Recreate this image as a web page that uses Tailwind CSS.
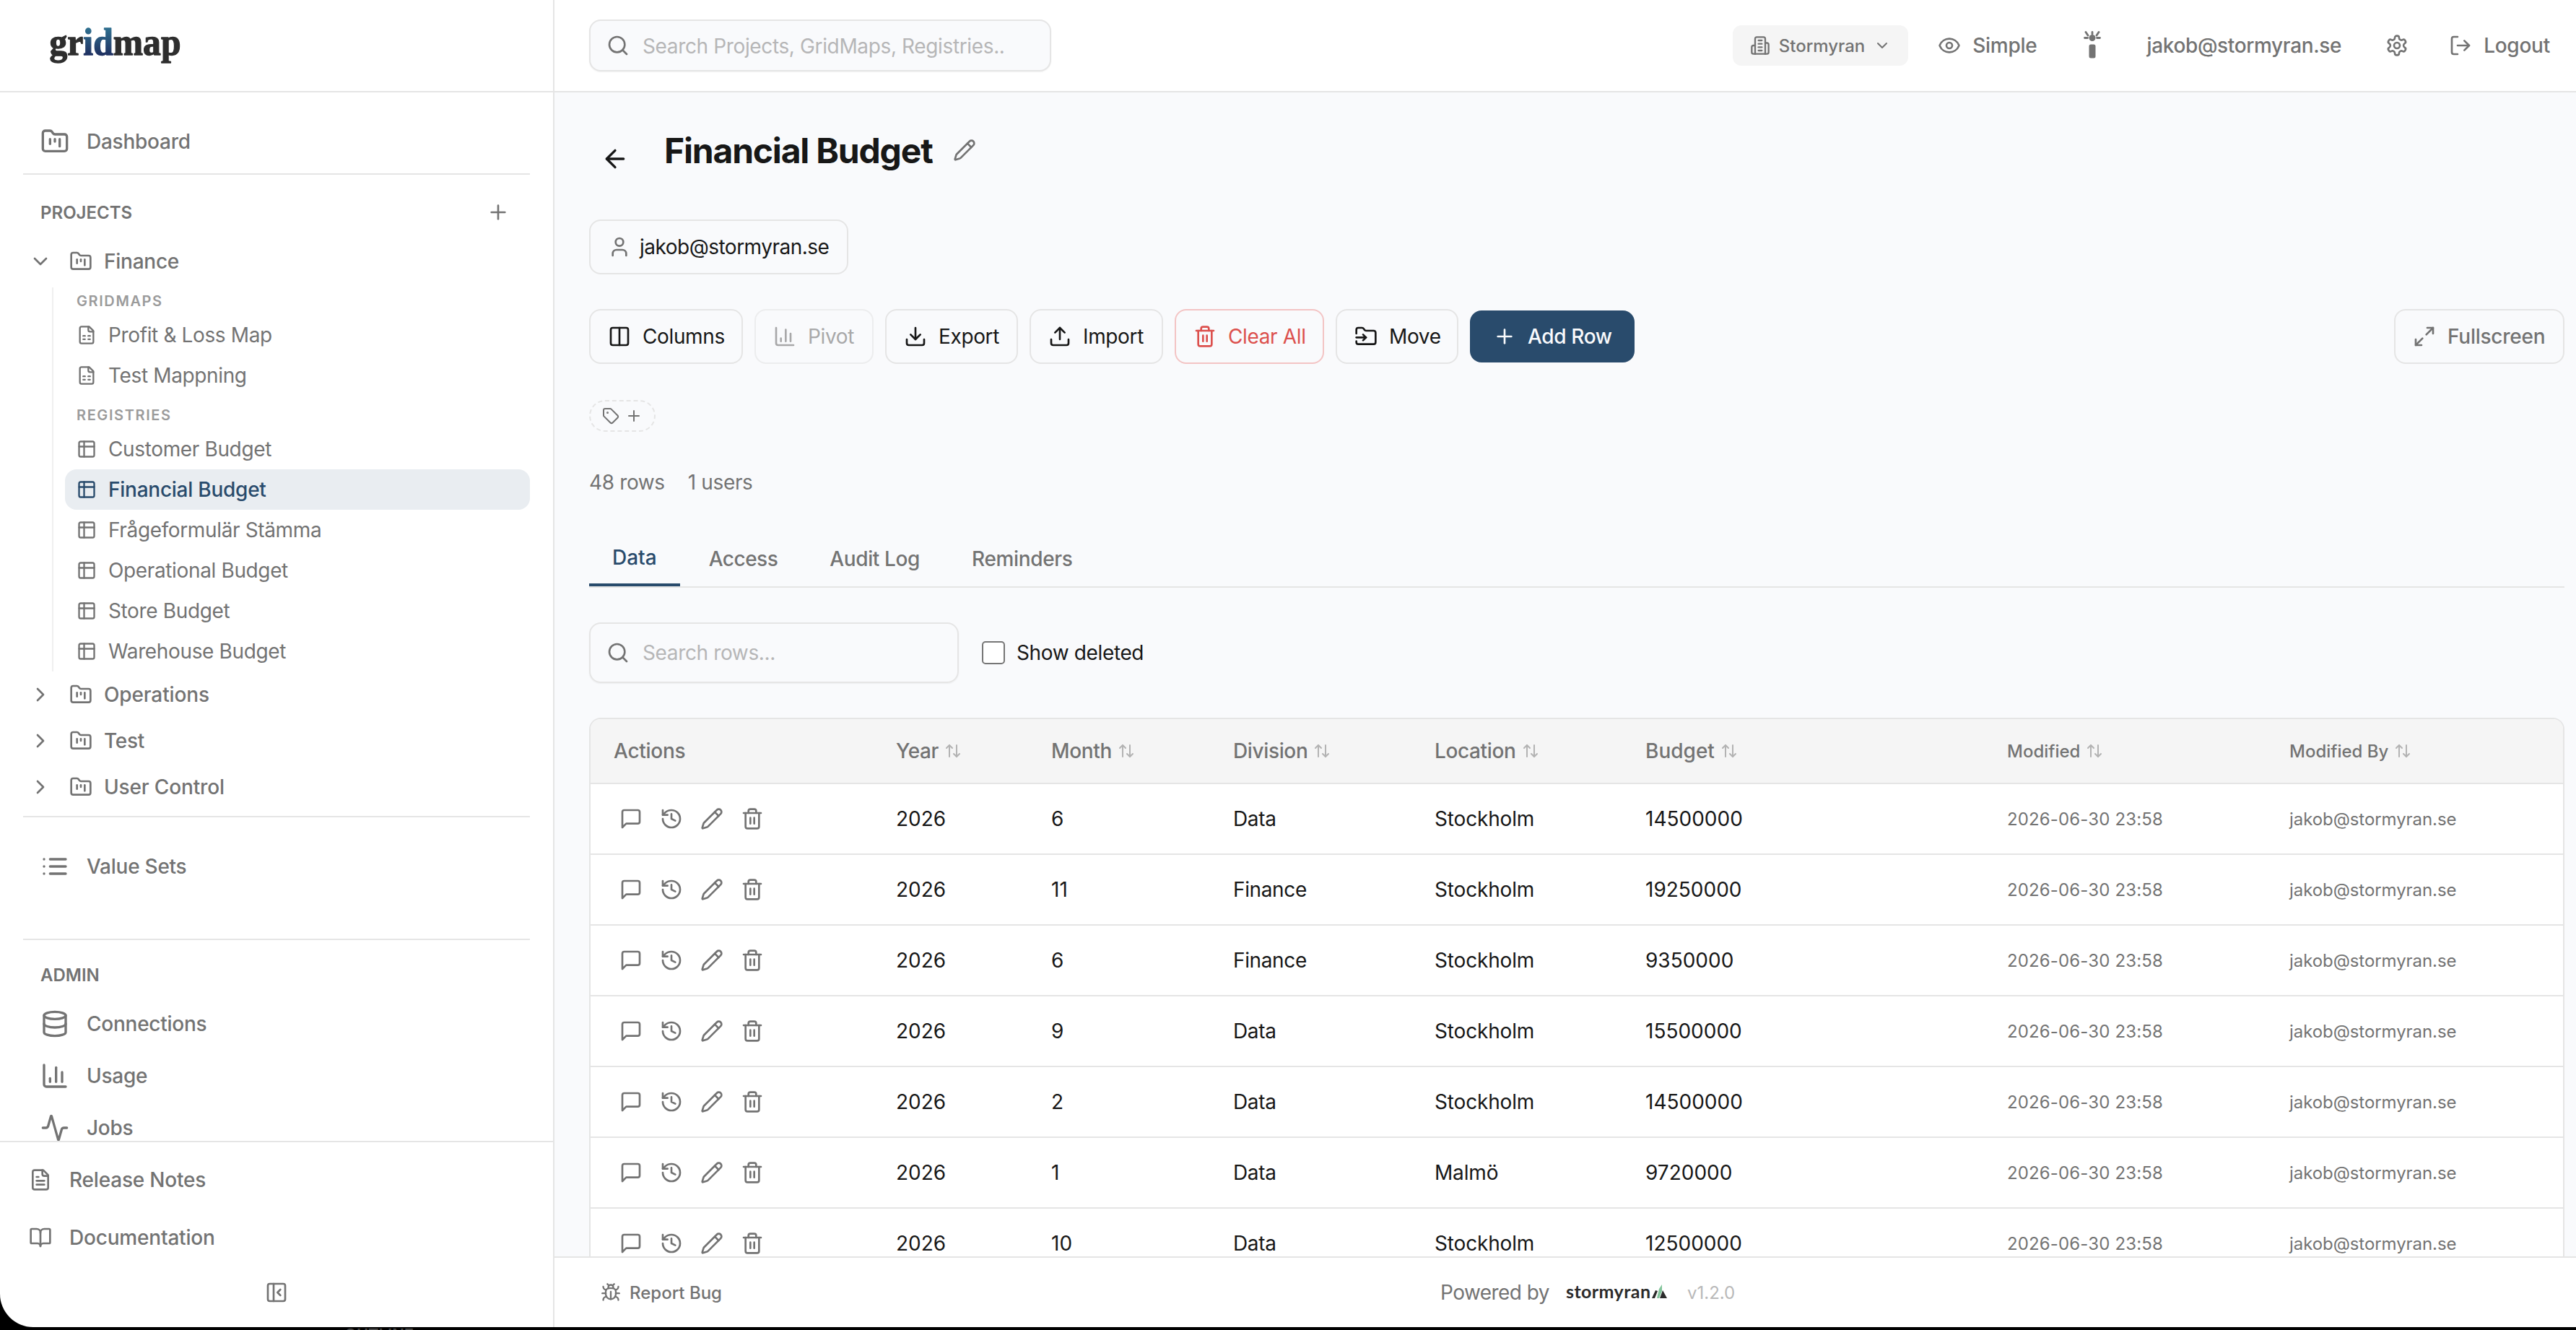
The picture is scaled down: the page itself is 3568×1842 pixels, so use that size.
<!DOCTYPE html>
<html lang="en">
<head>
    <meta charset="UTF-8">
    <meta name="viewport" content="width=device-width, initial-scale=1.0">
    <title>Financial Budget - gridmap</title>
    <script src="https://cdn.jsdelivr.net/npm/@tailwindcss/browser@4"></script>
</head>
<body class="bg-black font-['Inter',sans-serif] text-[28px] leading-10 tracking-[-0.013em] text-[#171717] h-[1842px] overflow-hidden">
    <!-- Icon sprite -->
    <svg class="hidden">
        <symbol id="folder" viewBox="0 0 24 24"><path d="M4 20h16a2 2 0 0 0 2-2V8a2 2 0 0 0-2-2h-7.93a2 2 0 0 1-1.66-.9l-.82-1.2A2 2 0 0 0 7.93 3H4a2 2 0 0 0-2 2v13c0 1.1.9 2 2 2Z"/><path d="M8 10v4"/><path d="M12 10v2"/><path d="M16 10v6"/></symbol>
        <symbol id="plus" viewBox="0 0 24 24"><path d="M5 12h14"/><path d="M12 5v14"/></symbol>
        <symbol id="chevron-down" viewBox="0 0 24 24"><path d="m6 9 6 6 6-6"/></symbol>
        <symbol id="chevron-right" viewBox="0 0 24 24"><path d="m9 18 6-6-6-6"/></symbol>
        <symbol id="sheet" viewBox="0 0 24 24"><path d="M15 2H6a2 2 0 0 0-2 2v16a2 2 0 0 0 2 2h12a2 2 0 0 0 2-2V7Z"/><path d="M14 2v4a2 2 0 0 0 2 2h4"/><path d="M8 13h2"/><path d="M14 13h2"/><path d="M8 17h2"/><path d="M14 17h2"/></symbol>
        <symbol id="table" viewBox="0 0 24 24"><rect width="18" height="18" x="3" y="3" rx="2"/><path d="M3 9h18"/><path d="M9 3v18"/></symbol>
        <symbol id="list" viewBox="0 0 24 24"><path d="M3 6h.01"/><path d="M3 12h.01"/><path d="M3 18h.01"/><path d="M8 6h13"/><path d="M8 12h13"/><path d="M8 18h13"/></symbol>
        <symbol id="database" viewBox="0 0 24 24"><ellipse cx="12" cy="5" rx="9" ry="3"/><path d="M3 5V19A9 3 0 0 0 21 19V5"/><path d="M3 12A9 3 0 0 0 21 12"/></symbol>
        <symbol id="chart" viewBox="0 0 24 24"><path d="M3 3v16a2 2 0 0 0 2 2h16"/><path d="M18 17V9"/><path d="M13 17V5"/><path d="M8 17v-3"/></symbol>
        <symbol id="activity" viewBox="0 0 24 24"><path d="M22 12h-2.48a2 2 0 0 0-1.93 1.46l-2.35 8.36a.25.25 0 0 1-.48 0L9.24 2.18a.25.25 0 0 0-.48 0l-2.35 8.36A2 2 0 0 1 4.49 12H2"/></symbol>
        <symbol id="file-text" viewBox="0 0 24 24"><path d="M15 2H6a2 2 0 0 0-2 2v16a2 2 0 0 0 2 2h12a2 2 0 0 0 2-2V7Z"/><path d="M14 2v4a2 2 0 0 0 2 2h4"/><path d="M10 9H8"/><path d="M16 13H8"/><path d="M16 17H8"/></symbol>
        <symbol id="book" viewBox="0 0 24 24"><path d="M12 7v14"/><path d="M3 18a1 1 0 0 1-1-1V4a1 1 0 0 1 1-1h5a4 4 0 0 1 4 4 4 4 0 0 1 4-4h5a1 1 0 0 1 1 1v13a1 1 0 0 1-1 1h-6a3 3 0 0 0-3 3 3 3 0 0 0-3-3z"/></symbol>
        <symbol id="panel" viewBox="0 0 24 24"><rect width="18" height="18" x="3" y="3" rx="2"/><path d="M9 3v18"/><path d="m16 15-3-3 3-3"/></symbol>
        <symbol id="search" viewBox="0 0 24 24"><circle cx="11" cy="11" r="8"/><path d="m21 21-4.3-4.3"/></symbol>
        <symbol id="building" viewBox="0 0 24 24"><path d="M6 22V4a2 2 0 0 1 2-2h8a2 2 0 0 1 2 2v18Z"/><path d="M6 12H4a2 2 0 0 0-2 2v6a2 2 0 0 0 2 2h2"/><path d="M18 9h2a2 2 0 0 1 2 2v9a2 2 0 0 1-2 2h-2"/><path d="M10 6h4"/><path d="M10 10h4"/><path d="M10 14h4"/><path d="M10 18h4"/></symbol>
        <symbol id="eye" viewBox="0 0 24 24"><path d="M2.062 12.348a1 1 0 0 1 0-.696 10.75 10.75 0 0 1 19.876 0 1 1 0 0 1 0 .696 10.75 10.75 0 0 1-19.876 0"/><circle cx="12" cy="12" r="3"/></symbol>
        <symbol id="settings" viewBox="0 0 24 24"><path d="M12.22 2h-.44a2 2 0 0 0-2 2v.18a2 2 0 0 1-1 1.73l-.43.25a2 2 0 0 1-2 0l-.15-.08a2 2 0 0 0-2.73.73l-.22.38a2 2 0 0 0 .73 2.73l.15.1a2 2 0 0 1 1 1.72v.51a2 2 0 0 1-1 1.74l-.15.09a2 2 0 0 0-.73 2.73l.22.38a2 2 0 0 0 2.73.73l.15-.08a2 2 0 0 1 2 0l.43.25a2 2 0 0 1 1 1.73V20a2 2 0 0 0 2 2h.44a2 2 0 0 0 2-2v-.18a2 2 0 0 1 1-1.73l.43-.25a2 2 0 0 1 2 0l.15.08a2 2 0 0 0 2.73-.73l.22-.39a2 2 0 0 0-.73-2.73l-.15-.08a2 2 0 0 1-1-1.74v-.5a2 2 0 0 1 1-1.74l.15-.09a2 2 0 0 0 .73-2.73l-.22-.38a2 2 0 0 0-2.73-.73l-.15.08a2 2 0 0 1-2 0l-.43-.25a2 2 0 0 1-1-1.73V4a2 2 0 0 0-2-2z"/><circle cx="12" cy="12" r="3"/></symbol>
        <symbol id="logout" viewBox="0 0 24 24"><path d="m16 17 5-5-5-5"/><path d="M21 12H9"/><path d="M9 21H5a2 2 0 0 1-2-2V5a2 2 0 0 1 2-2h4"/></symbol>
        <symbol id="arrow-left" viewBox="0 0 24 24"><path d="m12 19-7-7 7-7"/><path d="M19 12H5"/></symbol>
        <symbol id="pencil" viewBox="0 0 24 24"><path d="M21.174 6.812a1 1 0 0 0-3.986-3.987L3.842 16.174a2 2 0 0 0-.5.83l-1.321 4.352a.5.5 0 0 0 .623.622l4.353-1.32a2 2 0 0 0 .83-.497z"/><path d="m15 5 4 4"/></symbol>
        <symbol id="user" viewBox="0 0 24 24"><path d="M19 21v-2a4 4 0 0 0-4-4H9a4 4 0 0 0-4 4v2"/><circle cx="12" cy="7" r="4"/></symbol>
        <symbol id="columns" viewBox="0 0 24 24"><rect width="18" height="18" x="3" y="3" rx="2"/><path d="M12 3v18"/></symbol>
        <symbol id="download" viewBox="0 0 24 24"><path d="M12 15V3"/><path d="M21 15v4a2 2 0 0 1-2 2H5a2 2 0 0 1-2-2v-4"/><path d="m7 10 5 5 5-5"/></symbol>
        <symbol id="upload" viewBox="0 0 24 24"><path d="M12 3v12"/><path d="m17 8-5-5-5 5"/><path d="M21 15v4a2 2 0 0 1-2 2H5a2 2 0 0 1-2-2v-4"/></symbol>
        <symbol id="trash" viewBox="0 0 24 24"><path d="M10 11v6"/><path d="M14 11v6"/><path d="M19 6v14a2 2 0 0 1-2 2H7a2 2 0 0 1-2-2V6"/><path d="M3 6h18"/><path d="M8 6V4a2 2 0 0 1 2-2h4a2 2 0 0 1 2 2v2"/></symbol>
        <symbol id="move" viewBox="0 0 24 24"><path d="M2 9V5a2 2 0 0 1 2-2h3.9a2 2 0 0 1 1.69.9l.81 1.2a2 2 0 0 0 1.67.9H20a2 2 0 0 1 2 2v10a2 2 0 0 1-2 2H4a2 2 0 0 1-2-2v-1"/><path d="M2 13h10"/><path d="m9 16 3-3-3-3"/></symbol>
        <symbol id="maximize" viewBox="0 0 24 24"><path d="M15 3h6v6"/><path d="m21 3-7 7"/><path d="m3 21 7-7"/><path d="M9 21H3v-6"/></symbol>
        <symbol id="tag" viewBox="0 0 24 24"><path d="M12.586 2.586A2 2 0 0 0 11.172 2H4a2 2 0 0 0-2 2v7.172a2 2 0 0 0 .586 1.414l8.704 8.704a2.426 2.426 0 0 0 3.42 0l6.58-6.58a2.426 2.426 0 0 0 0-3.42z"/><circle cx="7.5" cy="7.5" r=".5" fill="currentColor"/></symbol>
        <symbol id="sort" viewBox="0 0 24 24"><path d="m21 16-4 4-4-4"/><path d="M17 20V4"/><path d="m3 8 4-4 4 4"/><path d="M7 4v16"/></symbol>
        <symbol id="message" viewBox="0 0 24 24"><path d="M21 15a2 2 0 0 1-2 2H7l-4 4V5a2 2 0 0 1 2-2h14a2 2 0 0 1 2 2z"/></symbol>
        <symbol id="history" viewBox="0 0 24 24"><path d="M3 12a9 9 0 1 0 9-9 9.75 9.75 0 0 0-6.74 2.74L3 8"/><path d="M3 3v5h5"/><path d="M12 7v5l4 2"/></symbol>
        <symbol id="bug" viewBox="0 0 24 24"><path d="M12 20v-9"/><path d="M14 7a4 4 0 0 1 4 4v3a6 6 0 0 1-12 0v-3a4 4 0 0 1 4-4z"/><path d="M14.12 3.88 16 2"/><path d="M21 21a4 4 0 0 0-3.81-4"/><path d="M21 5a4 4 0 0 1-3.55 3.97"/><path d="M22 13h-4"/><path d="M3 21a4 4 0 0 1 3.81-4"/><path d="M3 5a4 4 0 0 0 3.55 3.97"/><path d="M6 13H2"/><path d="m8 2 1.88 1.88"/><path d="M9 7.13V6a3 3 0 1 1 6 0v1.13"/></symbol>
    </svg>

    <div class="flex h-[1838px] w-full overflow-hidden rounded-bl-[46px] bg-white [&_svg]:shrink-0 [&_svg]:fill-none [&_svg]:stroke-current [&_svg]:stroke-2 [&_svg]:[stroke-linecap:round] [&_svg]:[stroke-linejoin:round]">
        <!-- Sidebar -->
        <aside class="flex w-[768px] shrink-0 flex-col border-r-2 border-[#e5e5e5] text-[#737373]">
            <div class="flex h-32 shrink-0 items-center border-b-2 border-[#e5e5e5] pl-[68px]">
                <svg class="h-16 w-[184px] overflow-visible" viewBox="0 0 184 64">
                    <defs>
                        <linearGradient id="logoBlue" x1="0" y1="8" x2="0" y2="46" gradientUnits="userSpaceOnUse">
                            <stop offset="0" stop-color="#2f6f8f"/>
                            <stop offset="1" stop-color="#1f2f60"/>
                        </linearGradient>
                    </defs>
                    <text x="0.500" y="45" textLength="182" lengthAdjust="spacingAndGlyphs" font-family="Liberation Serif, serif" font-weight="700" font-size="53" fill="#2e2e2e" stroke="#2e2e2e" stroke-width="1.3" letter-spacing="0">gr<tspan fill="url(#logoBlue)" stroke="url(#logoBlue)">id</tspan>map</text>
                </svg>
            </div>
            <nav class="min-h-0 flex-1 overflow-hidden px-8 pt-8">
                <a class="mb-2 flex h-[72px] items-center gap-6 px-6 font-medium tracking-[-0.009em]"><svg class="size-10"><use href="#folder"/></svg>Dashboard</a>
                <div class="border-t-2 border-[#e5e5e5] pt-8">
                    <div class="mb-4 flex h-10 items-center justify-between pl-6 pr-7"><span class="pt-0.5 text-2xl font-semibold tracking-normal">PROJECTS</span><svg class="size-8"><use href="#plus"/></svg></div>
                    <div class="flex h-16 items-center pl-2 font-medium tracking-[-0.009em]"><svg class="mr-6 size-8"><use href="#chevron-down"/></svg><svg class="mr-4 size-8"><use href="#folder"/></svg>Finance</div>
                    <div class="ml-10 mt-1 border-l-2 border-[#f0f0f0] pl-4">
                        <div class="flex h-[38px] items-center pl-4 text-xl font-semibold tracking-[0.08em] text-[#9b9b9b]">GRIDMAPS</div>
                        <a class="flex h-14 items-center gap-4 pl-4"><svg class="size-7"><use href="#sheet"/></svg>Profit &amp; Loss Map</a>
                        <a class="flex h-14 items-center gap-4 pl-4"><svg class="size-7"><use href="#sheet"/></svg>Test Mappning</a>
                        <div class="mt-2 flex h-[38px] items-center pl-4 text-xl font-semibold tracking-[0.08em] text-[#9b9b9b]">REGISTRIES</div>
                        <a class="flex h-14 items-center gap-4 pl-4"><svg class="size-7"><use href="#table"/></svg>Customer Budget</a>
                        <a class="flex h-14 items-center gap-4 rounded-2xl bg-[#e9edf1] pl-4 font-medium tracking-[-0.009em] text-[#294b6c]"><svg class="size-7"><use href="#table"/></svg>Financial Budget</a>
                        <a class="flex h-14 items-center gap-4 pl-4"><svg class="size-7"><use href="#table"/></svg>Frågeformulär Stämma</a>
                        <a class="flex h-14 items-center gap-4 pl-4"><svg class="size-7"><use href="#table"/></svg>Operational Budget</a>
                        <a class="flex h-14 items-center gap-4 pl-4"><svg class="size-7"><use href="#table"/></svg>Store Budget</a>
                        <a class="flex h-14 items-center gap-4 pl-4"><svg class="size-7"><use href="#table"/></svg>Warehouse Budget</a>
                    </div>
                    <div class="flex h-16 items-center pl-2 font-medium tracking-[-0.005em]"><svg class="mr-6 size-8"><use href="#chevron-right"/></svg><svg class="mr-4 size-8"><use href="#folder"/></svg>Operations</div>
                    <div class="flex h-16 items-center pl-2 font-medium tracking-[-0.009em]"><svg class="mr-6 size-8"><use href="#chevron-right"/></svg><svg class="mr-4 size-8"><use href="#folder"/></svg>Test</div>
                    <div class="flex h-16 items-center pl-2 font-medium tracking-[-0.005em]"><svg class="mr-6 size-8"><use href="#chevron-right"/></svg><svg class="mr-4 size-8"><use href="#folder"/></svg>User Control</div>
                </div>
                <div class="mt-2 border-t-2 border-[#e5e5e5] pb-16 pt-8">
                    <a class="flex h-[72px] items-center gap-6 px-6 font-medium tracking-[-0.009em]"><svg class="size-10"><use href="#list"/></svg>Value Sets</a>
                </div>
                <div class="border-t-2 border-[#e5e5e5] pt-8">
                    <div class="mb-4 flex h-8 items-center pl-6 pt-0.5 text-2xl font-semibold tracking-normal">ADMIN</div>
                    <a class="flex h-[72px] items-center gap-6 px-6 font-medium tracking-[-0.009em]"><svg class="size-10"><use href="#database"/></svg>Connections</a>
                    <a class="flex h-[72px] items-center gap-6 px-6 font-medium tracking-[-0.009em]"><svg class="size-10"><use href="#chart"/></svg>Usage</a>
                    <a class="flex h-[72px] items-center gap-6 px-6 font-medium tracking-[-0.009em]"><svg class="size-10"><use href="#activity"/></svg>Jobs</a>
                </div>
            </nav>
            <div class="h-[258px] shrink-0 border-t-2 border-[#e5e5e5] px-4 pt-4 font-medium tracking-[-0.007em]">
                <a class="mb-2 flex h-[72px] items-center gap-6 px-6"><svg class="size-8"><use href="#file-text"/></svg>Release Notes</a>
                <a class="flex h-[72px] items-center gap-6 px-6"><svg class="size-8"><use href="#book"/></svg>Documentation</a>
                <div class="mt-2 flex h-16 items-center justify-center"><svg class="size-8"><use href="#panel"/></svg></div>
            </div>
        </aside>

        <div class="flex min-w-0 flex-1 flex-col">
            <!-- Top bar -->
            <header class="flex h-32 shrink-0 items-center justify-between border-b-2 border-[#e5e5e5] pl-12 pr-9 font-medium text-[#737373]">
                <div class="flex h-[72px] w-[640px] items-center gap-[18px] rounded-2xl border-2 border-[#e5e5e5] bg-[#f9fafc] px-[22px] font-normal shadow-xs"><svg class="size-8"><use href="#search"/></svg><span class="pt-0.5 text-[#b6b6b7]">Search Projects, GridMaps, Registries..</span></div>
                <div class="flex items-center">
                    <div class="mr-[41px] flex h-14 items-center rounded-xl bg-[#f5f5f5] px-6 text-2xl tracking-normal"><svg class="mr-3 size-7"><use href="#building"/></svg><span class="pt-0.5">Stormyran</span><svg class="ml-3 size-6"><use href="#chevron-down"/></svg></div>
                    <div class="mr-16 flex items-center gap-4 tracking-[-0.009em]"><svg class="size-8"><use href="#eye"/></svg>Simple</div>
                    <!-- Flashlight -->
                    <svg class="mr-16 h-10 w-6" viewBox="0 0 24 40">
                        <path stroke-width="2.8" d="M12 1.500v2.500M3 1.500l3 4.500M21 1.500l-3 4.500M1.500 9.500h4M18.500 9.500h4"/>
                        <circle cx="12" cy="9.500" r="4.500" fill="currentColor" stroke="none"/>
                        <rect x="7.500" y="18.500" width="9" height="19" rx="2.500" fill="currentColor" stroke="none"/>
                    </svg>
                    <span class="mr-[61px]">jakob@stormyran.se</span>
                    <svg class="mr-14 size-8"><use href="#settings"/></svg>
                    <div class="flex items-center gap-4 tracking-[-0.009em]"><svg class="size-8"><use href="#logout"/></svg>Logout</div>
                </div>
            </header>

            <!-- Registry page -->
            <main class="min-h-0 flex-1 overflow-hidden bg-[#f9fafc] pl-12 pr-4">
                <div class="flex h-40 pl-4 pt-[52px]">
                    <svg class="mt-5 size-10"><use href="#arrow-left"/></svg>
                    <h1 class="ml-12 mt-[-3px] text-[48px] font-bold leading-[64px] tracking-[-0.025em]">Financial Budget</h1>
                    <svg class="ml-7 mt-3 size-8 text-[#737373]"><use href="#pencil"/></svg>
                </div>
                <div class="mt-4 flex h-[76px] w-[359px] items-center gap-3 rounded-2xl border-2 border-[#e5e5e5] px-6 tracking-[-0.018em]"><svg class="size-8 text-[#737373]"><use href="#user"/></svg>jakob@stormyran.se</div>

                <div class="mt-12 flex h-[76px] items-center gap-4 whitespace-nowrap">
                    <div class="flex h-[76px] w-[213px] items-center gap-4 rounded-2xl border-2 border-[#e5e5e5] px-6"><svg class="size-8"><use href="#columns"/></svg>Columns</div>
                    <div class="flex h-[76px] w-[165px] items-center gap-4 rounded-2xl border-2 border-[#e5e5e5] px-6 text-[#737373] opacity-60"><svg class="size-8"><use href="#chart"/></svg>Pivot</div>
                    <div class="flex h-[76px] w-[184px] items-center gap-4 rounded-2xl border-2 border-[#e5e5e5] px-6"><svg class="size-8"><use href="#download"/></svg>Export</div>
                    <div class="flex h-[76px] w-[185px] items-center gap-4 rounded-2xl border-2 border-[#e5e5e5] px-6"><svg class="size-8"><use href="#upload"/></svg>Import</div>
                    <div class="flex h-[76px] w-[207px] items-center gap-4 rounded-2xl border-2 border-[#f3c4c4] px-6 text-[#dc504d]"><svg class="size-8"><use href="#trash"/></svg>Clear All</div>
                    <div class="flex h-[76px] w-[170px] items-center gap-4 rounded-2xl border-2 border-[#e5e5e5] px-6"><svg class="size-8"><use href="#move"/></svg>Move</div>
                    <div class="flex h-[72px] w-[228px] items-center gap-4 rounded-2xl bg-[#294b6c] px-8 font-medium text-[#f9fafc]"><svg class="size-8"><use href="#plus"/></svg>Add Row</div>
                    <div class="ml-auto flex h-[76px] w-[236px] items-center gap-4 rounded-2xl border-2 border-[#e5e5e5] px-6 font-medium tracking-[-0.009em] text-[#737373]"><svg class="size-8"><use href="#maximize"/></svg>Fullscreen</div>
                </div>

                <div class="mt-[50px] flex h-11 w-fit items-center gap-2 rounded-full border-2 border-dashed border-[#e5e5e5] px-4 text-[#737373]"><svg class="size-6"><use href="#tag"/></svg><svg class="size-6"><use href="#plus"/></svg></div>

                <div class="mt-[50px] flex gap-8 text-[#737373]"><span>48 rows</span><span>1 users</span></div>

                <div class="mt-12 flex h-[78px] items-end gap-2 border-b-2 border-[#e5e5e5] font-medium text-[#737373]">
                    <div class="border-b-4 border-[#294b6c] px-8 pb-4 tracking-normal text-[#294b6c]">Data</div>
                    <div class="px-8 pb-[18px] tracking-[-0.018em]">Access</div>
                    <div class="px-8 pb-[18px]">Audit Log</div>
                    <div class="px-8 pb-[18px]">Reminders</div>
                </div>

                <div class="mt-12 flex items-center">
                    <div class="flex h-[84px] w-[512px] items-center gap-[18px] rounded-2xl border-2 border-[#e5e5e5] px-[22px] shadow-xs"><svg class="size-8 text-[#737373]"><use href="#search"/></svg><span class="text-[#b6b6b7]">Search rows...</span></div>
                    <span class="ml-8 mr-4 size-8 rounded-[5px] border-2 border-[#767676] bg-white"></span>
                    Show deleted
                </div>

                <div class="mt-12 overflow-hidden rounded-t-2xl border-2 border-b-0 border-[#e5e5e5] bg-white">
                    <div class="grid h-[90px] grid-cols-[391px_215px_252px_279px_292px_501px_391px_1fr] items-center border-b-2 border-[#e5e5e5] bg-[#f5f5f5] pl-8 font-medium text-[#737373]">
                        <div class="tracking-[-0.009em]">Actions</div>
                        <div class="flex items-center gap-2">Year<svg class="size-6 opacity-50"><use href="#sort"/></svg></div>
                        <div class="flex items-center gap-2">Month<svg class="size-6 opacity-50"><use href="#sort"/></svg></div>
                        <div class="flex items-center gap-2">Division<svg class="size-6 opacity-50"><use href="#sort"/></svg></div>
                        <div class="flex items-center gap-2">Location<svg class="size-6 opacity-50"><use href="#sort"/></svg></div>
                        <div class="flex items-center gap-2 tracking-normal">Budget<svg class="size-6 opacity-50"><use href="#sort"/></svg></div>
                        <div class="flex items-center gap-2 text-2xl tracking-normal"><span class="pt-0.5">Modified</span><svg class="size-6 opacity-50"><use href="#sort"/></svg></div>
                        <div class="flex items-center gap-2 text-2xl tracking-normal"><span class="pt-0.5">Modified By</span><svg class="size-6 opacity-50"><use href="#sort"/></svg></div>
                    </div>
                    <div id="rows"></div>
                </div>
            </main>

            <footer class="grid h-[98px] shrink-0 grid-cols-[1163px_1fr] items-center border-t-2 border-[#e5e5e5] pl-16 text-[#737373]">
                <div class="flex items-center gap-3 text-2xl font-medium tracking-normal"><svg class="size-7"><use href="#bug"/></svg><span class="pt-0.5">Report Bug</span></div>
                <div class="flex items-center whitespace-nowrap">
                    <span class="w-[150px] tracking-[-0.02em]">Powered by</span>
                    <svg class="ml-6 h-10 w-[140px] overflow-visible" viewBox="0 0 140 40">
                        <text x="0" y="28" textLength="117" font-family="Lato, sans-serif" font-weight="700" font-size="25" letter-spacing="0" fill="#2b2b2b" stroke="none">stormyran</text>
                        <path fill="#2b2b2b" stroke="none" d="M119 28l5-11 3 1-4 10zM130 28l4-11 6 11z"/>
                        <path fill="#82c49b" stroke="none" d="M126 28l3-13 4-6v9l-4 10z"/>
                    </svg>
                    <span class="ml-7 pt-0.5 text-2xl tracking-normal text-[#b9b9b9]">v1.2.0</span>
                </div>
            </footer>
        </div>
    </div>

    <!-- Strip of the window behind -->
    <div class="h-1 overflow-hidden pl-[477px] text-[22px] font-semibold leading-[20px] tracking-normal text-[#4a4a4a]">OUTLINE</div>

    <script>
        const rows = [
            ['2026', '6', 'Data', 'Stockholm', '14500000'],
            ['2026', '11', 'Finance', 'Stockholm', '19250000'],
            ['2026', '6', 'Finance', 'Stockholm', '9350000'],
            ['2026', '9', 'Data', 'Stockholm', '15500000'],
            ['2026', '2', 'Data', 'Stockholm', '14500000'],
            ['2026', '1', 'Data', 'Malmö', '9720000'],
            ['2026', '10', 'Data', 'Stockholm', '12500000']
        ];

        document.getElementById('rows').innerHTML = rows.map(([year, month, division, location, budget]) => `
            <div class="grid h-[98px] grid-cols-[391px_215px_252px_279px_292px_501px_391px_1fr] items-center border-b-2 border-[#e5e5e5] pl-8">
                <div class="flex gap-6 pl-2 text-[#737373]">
                    <svg class="size-8"><use href="#message"/></svg>
                    <svg class="size-8"><use href="#history"/></svg>
                    <svg class="size-8"><use href="#pencil"/></svg>
                    <svg class="size-8"><use href="#trash"/></svg>
                </div>
                <div class="tracking-normal">${year}</div>
                <div class="tracking-normal">${month}</div>
                <div>${division}</div>
                <div class="tracking-[-0.006em]">${location}</div>
                <div class="tracking-normal">${budget}</div>
                <div class="pt-0.5 text-2xl tracking-[0.006em] text-[#737373]">2026-06-30 23:58</div>
                <div class="pt-0.5 text-2xl tracking-[-0.003em] text-[#737373]">jakob@stormyran.se</div>
            </div>
        `).join('');
    </script>
</body>
</html>
